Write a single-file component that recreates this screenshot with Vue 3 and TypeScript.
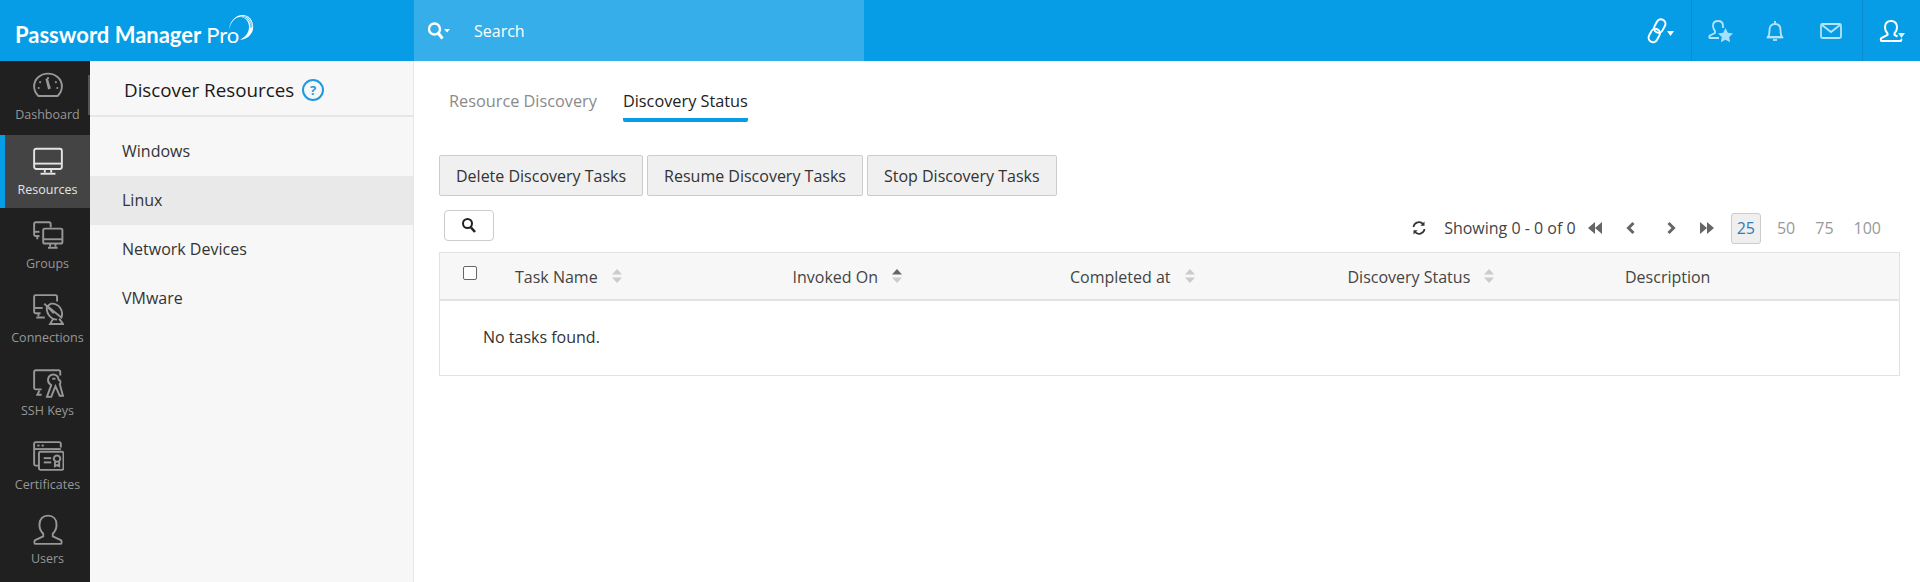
<script setup lang="ts">
interface NavItem { label: string; active?: boolean; paths: string[]; fills?: string[] }

const nav: NavItem[] = [
  {
    label: 'Dashboard',
    paths: ['M6 22.5C3.5 20 2 16.8 2 13.5 2 6.5 7.8 1.5 15 1.5S28 6.5 28 13.5c0 3.3-1.5 6.5-4 9Z', 'M15 5v1.5', 'M7 9l1.2 1', 'M23 9l-1.2 1', 'M5.5 15H7', 'M23 15h1.5'],
    fills: ['M12.6 6.5l2.2-.6 2.9 9.6-2.6.8Z'],
  },
  {
    label: 'Resources',
    active: true,
    paths: ['M4 2.500h22a2 2 0 0 1 2 2v15a2 2 0 0 1-2 2H4a2 2 0 0 1-2-2v-15a2 2 0 0 1 2-2Z', 'M2 16.500h26', 'M12 22v3', 'M18 22v3', 'M8 26h14'],
  },
  {
    label: 'Groups',
    paths: ['M7 16H3.500a1.500 1.500 0 0 1-1.500-1.500v-10A1.500 1.500 0 0 1 3.500 3H16a1.500 1.500 0 0 1 1.500 1.500V8', 'M2 12h5', 'M5 16v3', 'M12 9h15a1.500 1.500 0 0 1 1.500 1.500v11A1.500 1.500 0 0 1 27 23H12a1.500 1.500 0 0 1-1.500-1.500v-11A1.500 1.500 0 0 1 12 9Z', 'M10.500 19h18', 'M17 23v3', 'M22 23v3', 'M15 27h9'],
  },
  {
    label: 'Connections',
    paths: ['M8 19H3.500A1.500 1.500 0 0 1 2 17.500v-14A1.500 1.500 0 0 1 3.500 2H22a1.500 1.500 0 0 1 1.500 1.500V8', 'M2 14h8', 'M6 19v3', 'M4 23h8', 'M18 10a9.500 9.500 0 0 1 9.500 13L14.500 12.500A9 9 0 0 1 18 10Z', 'M14 12.500c-1 6 3 12 9.500 12.500', 'M11.500 10l9 9', 'M20 24l-3 5h12l-3.500-5'],
  },
  {
    label: 'SSH Keys',
    paths: ['M9 21H3.500A1.500 1.500 0 0 1 2 19.500v-15A1.500 1.500 0 0 1 3.500 3H25a1.500 1.500 0 0 1 1.500 1.500V8', 'M9 26H5l2-4', 'M15 12a5 5 0 0 1 10 0c2 0 2 3 1 4l3 11h-3l-4-9-4 10h-4l4-11c-2-1-3-3-3-5Z', 'M19 11h3'],
  },
  {
    label: 'Certificates',
    paths: ['M6 24H3.500A1.500 1.500 0 0 1 2 22.500v-19A1.500 1.500 0 0 1 3.500 2h22A1.500 1.500 0 0 1 27 3.500V7', 'M2 8.500h25', 'M5 5.200h2', 'M9 5.200h2', 'M8 11h20a1.500 1.500 0 0 1 1.500 1.500v14a1.500 1.500 0 0 1-1.500 1.500H8a1.500 1.500 0 0 1-1.500-1.500v-14A1.500 1.500 0 0 1 8 11Z', 'M11 17h7', 'M11 21h7', 'M23.500 14.500a3 3 0 1 1-.01 0Z', 'M21.500 20.500v4l2-1 2 1v-4'],
  },
  {
    label: 'Users',
    paths: ['M15 1.500c-5 0-8 3.500-8 8.500 0 3.500 1.500 6.500 3.500 8.500v2.500L3 24.500c-1 .6-1 3.500 0 3.500h24c1 0 1-2.900 0-3.500L19.500 21v-2.500c2-2 3.500-5 3.500-8.500 0-5-3-8.500-8-8.500Z'],
  },
]

const kinds = ['Windows', 'Linux', 'Network Devices', 'VMware']
const actions = ['Delete Discovery Tasks', 'Resume Discovery Tasks', 'Stop Discovery Tasks']
const columns = [
  { label: 'Task Name', sort: 'none' },
  { label: 'Invoked On', sort: 'asc' },
  { label: 'Completed at', sort: 'none' },
  { label: 'Discovery Status', sort: 'none' },
  { label: 'Description', sort: '' },
]
const sizes = ['25', '50', '75', '100']
</script>

<template>
  <div class="page">
    <header class="top">
      <div class="brand">
        <span class="brand-name">Password Manager <span class="brand-pro">Pro</span></span>
        <svg class="swoosh" width="26" height="28" viewBox="0 0 26 28">
          <path d="M1 15C2 6 9 0 16 1c7 1 10 8 9 14-1 6-6 10-13 11 5-3 9-7 9-13 0-6-4-10-9-10C7 3 3 8 1 15Z" fill="#fff" />
          <path d="M12 3c6-1 11 4 11 11" fill="none" stroke="#069de6" stroke-width=".7" />
          <path d="M16 2c5 1 8 6 8 11" fill="none" stroke="#069de6" stroke-width=".6" />
        </svg>
      </div>
      <div class="search">
        <svg width="24" height="20" viewBox="0 0 24 20" fill="none">
          <circle cx="7.500" cy="8" r="5.500" stroke="#fff" stroke-width="2.400" />
          <path d="M11.500 12.500l4 5" stroke="#fff" stroke-width="3" />
          <path d="M17 8h6l-3 3.500Z" fill="#fff" />
        </svg>
        <span>Search</span>
      </div>
      <div class="top-tools">
        <div class="tool-group link">
          <svg width="20" height="26" viewBox="0 0 20 26" fill="none" stroke="#fff" stroke-width="2">
            <rect x="-4.500" y="-7.500" width="9" height="14" rx="4.500" transform="translate(12.500 8.500) rotate(28)" />
            <rect x="-4.500" y="-6.500" width="9" height="14" rx="4.500" transform="translate(7.500 17) rotate(28)" />
          </svg>
          <svg class="caret" width="7" height="5" viewBox="0 0 7 5"><path d="M0 0h7L3.500 5Z" fill="#fff" /></svg>
        </div>
        <div class="tool-group middle">
          <svg width="26" height="24" viewBox="0 0 26 24" fill="none">
            <path d="M10 2c-3.500 0-5 2.500-5 5 0 2 1 3.600 2 5v2l-5 2.500c-1 .5-1 2.500 0 2.500h9" stroke="#b5e4fb" stroke-width="1.800" />
            <path d="M10 2c3.500 0 5 2.500 5 5v2" stroke="#b5e4fb" stroke-width="1.800" />
            <path d="M17.500 9l2.300 4.800 5.200.7-3.800 3.600.9 5.200-4.600-2.500-4.600 2.500.9-5.200L10 14.500l5.200-.7Z" fill="#a8e0fb" />
          </svg>
          <svg class="bell" width="20" height="24" viewBox="0 0 20 24" fill="none" stroke="#b5e4fb" stroke-width="1.800">
            <path d="M3 18c1.500-2 1.500-4 1.500-7 0-3.500 2-6 5.500-6s5.500 2.500 5.500 6c0 3 0 5 1.500 7Z" />
            <path d="M2 18.500h16" />
            <path d="M10 2v3" />
            <path d="M8 21h4" />
          </svg>
          <svg class="mail" width="24" height="18" viewBox="0 0 24 18" fill="none" stroke="#b5e4fb" stroke-width="1.800">
            <rect x="2" y="2" width="20" height="14" rx="1.500" />
            <path d="M3 3l9 7 9-7" />
          </svg>
        </div>
        <div class="tool-group account">
          <svg width="26" height="24" viewBox="0 0 26 24" fill="none" stroke="#fff" stroke-width="2">
            <path d="M12 2c-4 0-6 2.800-6 6.500 0 2.500 1 4.500 2.500 6V16l-6 3c-1 .5-1 3 0 3h19c1 0 1-1.500.5-2" />
            <path d="M12 2c4 0 6 2.800 6 6.500 0 2.500-1 4.500-2.500 6V16l3 1.500" />
          </svg>
          <svg class="caret-over" width="7" height="5" viewBox="0 0 7 5"><path d="M0 0h7L3.500 5Z" fill="#d8f1fd" /></svg>
        </div>
      </div>
    </header>

    <div class="body">
      <nav class="rail">
        <a v-for="item in nav" :key="item.label" class="rail-item" :class="{ active: item.active }">
          <svg width="32" height="32" viewBox="0 0 30 30" fill="none" stroke="currentColor" stroke-width="1.800">
            <path v-for="(d, i) in item.paths" :key="i" :d="d" />
            <path v-for="(d, i) in item.fills ?? []" :key="'f' + i" :d="d" fill="currentColor" stroke="none" />
          </svg>
          <span>{{ item.label }}</span>
        </a>
      </nav>

      <aside class="panel">
        <div class="panel-head">
          <span>Discover Resources</span>
          <span class="help">?</span>
        </div>
        <ul class="kinds">
          <li v-for="kind in kinds" :key="kind" :class="{ current: kind === 'Linux' }">{{ kind }}</li>
        </ul>
      </aside>

      <main class="main">
        <div class="tabs">
          <span class="tab">Resource Discovery</span>
          <span class="tab on">Discovery Status</span>
        </div>

        <div class="actions">
          <button v-for="action in actions" :key="action" type="button">{{ action }}</button>
        </div>

        <div class="tools">
          <button class="find" type="button" aria-label="Search">
            <svg width="16" height="16" viewBox="0 0 16 16" fill="none" stroke="#222">
              <circle cx="6.500" cy="6.500" r="4.500" stroke-width="2" />
              <path d="M10 10.500l4 4.500" stroke-width="2.600" />
            </svg>
          </button>
          <div class="pager">
            <svg class="refresh" width="16" height="16" viewBox="0 0 16 16" fill="none" stroke="#333" stroke-width="1.700">
              <path d="M2.500 7a5.500 5.500 0 0 1 9.700-2.800" />
              <path d="M13.500 9a5.500 5.500 0 0 1-9.700 2.800" />
              <path d="M13.500 1.500v4.200H9.300Z" fill="#333" stroke="none" />
              <path d="M2.500 14.500v-4.200h4.200Z" fill="#333" stroke="none" />
            </svg>
            <span class="count">Showing 0 - 0 of 0</span>
            <div class="arrows">
              <svg width="14" height="14" viewBox="0 0 14 14"><path d="M7 1v12L0 7ZM14 1v12L7 7Z" fill="#666" /></svg>
              <svg width="14" height="14" viewBox="0 0 14 14"><path d="M9.500 2 4.500 7l5 5" fill="none" stroke="#666" stroke-width="3" /></svg>
              <svg class="next" width="14" height="14" viewBox="0 0 14 14"><path d="M4.500 2l5 5-5 5" fill="none" stroke="#666" stroke-width="3" /></svg>
              <svg width="14" height="14" viewBox="0 0 14 14"><path d="M0 1v12l7-6ZM7 1v12l7-6Z" fill="#666" /></svg>
            </div>
            <div class="sizes">
              <span v-for="size in sizes" :key="size" class="size" :class="{ picked: size === '25' }">{{ size }}</span>
            </div>
          </div>
        </div>

        <div class="grid">
          <div class="grid-head">
            <span class="check-cell"><i class="check"></i></span>
            <span v-for="col in columns" :key="col.label" class="col">
              {{ col.label }}
              <svg v-if="col.sort" class="sort" width="10" height="14" viewBox="0 0 10 14">
                <path d="M5 0l5 5.500H0Z" :fill="col.sort === 'asc' ? '#666' : '#ccc'" />
                <path d="M5 14l5-5.500H0Z" fill="#ccc" />
              </svg>
            </span>
          </div>
          <div class="empty">No tasks found.</div>
        </div>
      </main>
    </div>
  </div>
</template>

<style>
html,
body {
  margin: 0;
  background: #fff;
}
</style>

<style scoped>
.page {
  width: 1920px;
  height: 582px;
  overflow: hidden;
  display: flex;
  flex-direction: column;
  font-family: "Open Sans", "Liberation Sans", sans-serif;
  color: #333;
}

.top {
  height: 61px;
  flex: none;
  display: flex;
  background: #069de6;
}
.brand {
  width: 414px;
  flex: none;
  box-sizing: border-box;
  padding-left: 15px;
  display: flex;
  align-items: flex-start;
}
.brand-name {
  margin-top: 20px;
  font-family: Lato, "Open Sans", sans-serif;
  font-size: 22px;
  font-weight: 700;
  line-height: 29px;
  color: #fff;
  white-space: nowrap;
}
.brand-pro {
  font-weight: 400;
}
.swoosh {
  margin-top: 14px;
  margin-left: -11px;
}
.search {
  width: 450px;
  flex: none;
  box-sizing: border-box;
  padding-left: 13px;
  display: flex;
  align-items: center;
  gap: 23px;
  background: #35aeea;
  color: #fff;
  font-size: 16px;
}
.top-tools {
  flex: 1;
  display: flex;
  justify-content: flex-end;
}
.tool-group {
  display: flex;
  align-items: center;
  box-sizing: border-box;
}
.link {
  padding-right: 17px;
  border-right: 1px solid #0b8bcb;
  height: 61px;
}
.caret {
  margin-top: 5px;
}
.middle {
  width: 171px;
  padding-left: 16px;
  border-right: 1px solid #0b8bcb;
}
.bell {
  margin-left: 31px;
}
.mail {
  margin-left: 34px;
}
.account {
  width: 57px;
  padding-left: 16px;
  position: relative;
}
.caret-over {
  position: absolute;
  left: 35px;
  top: 33px;
}

.body {
  flex: 1;
  display: flex;
  min-height: 0;
}

.rail {
  width: 90px;
  flex: none;
  display: flex;
  flex-direction: column;
  background: #202020;
}
.rail-item {
  height: 73.700px;
  flex: none;
  box-sizing: border-box;
  padding-top: 11px;
  border-left: 5px solid transparent;
  display: flex;
  flex-direction: column;
  align-items: center;
  color: #979797;
  font-size: 12.500px;
  line-height: 16px;
}
.rail-item span {
  margin-top: 4.500px;
}
.rail-item:first-child span {
  margin-top: 3px;
}
.rail-item.active {
  background: #444;
  border-left-color: #069de6;
  color: #e4e4e4;
}

.panel {
  width: 324px;
  flex: none;
  box-sizing: border-box;
  background: #f7f7f7;
  border-right: 1px solid #e6e6e6;
  position: relative;
}
.panel-head {
  height: 56px;
  box-sizing: border-box;
  padding-left: 34px;
  padding-top: 3px;
  display: flex;
  align-items: center;
  gap: 8px;
  border-bottom: 2px solid #e6e6e6;
  font-size: 18.800px;
  color: #1a1a1a;
}
.panel::before {
  content: "";
  position: absolute;
  left: -2px;
  top: 14px;
  width: 2px;
  height: 40px;
  background: #555;
}
.help {
  width: 18px;
  height: 18px;
  flex: none;
  border: 2px solid #1e9be0;
  border-radius: 50%;
  color: #1e9be0;
  font-size: 13px;
  font-weight: 700;
  line-height: 18px;
  text-align: center;
}
.kinds {
  margin: 10px 0 0;
  padding: 0;
  list-style: none;
}
.kinds li {
  height: 49px;
  padding-left: 32px;
  font-size: 16px;
  line-height: 48px;
  color: #333;
}
.kinds li.current {
  background: #e9e9e9;
}

.main {
  flex: 1;
  min-width: 0;
  box-sizing: border-box;
  padding-left: 25px;
  padding-right: 20px;
}
.tabs {
  display: flex;
  gap: 26px;
  height: 61px;
  padding-left: 10px;
  box-sizing: border-box;
  padding-top: 29px;
  font-size: 16.300px;
  line-height: 22px;
}
.tab {
  color: #8a8a8a;
  height: 28px;
}
.tab.on {
  color: #222;
  border-bottom: 4px solid #069de6;
  border-radius: 0 0 2px 2px;
}
.actions {
  display: flex;
  gap: 4px;
  margin-top: 33px;
}
.actions button {
  height: 41px;
  padding: 0 16px;
  border: 1px solid #ccc;
  border-radius: 2px;
  background: #f0f0f0;
  font: 16px "Open Sans", sans-serif;
  color: #333;
}
.tools {
  display: flex;
  justify-content: space-between;
  height: 42px;
  margin-top: 14px;
  padding-left: 5px;
}
.find {
  width: 50px;
  height: 31px;
  padding: 0;
  border: 1px solid #ccc;
  border-radius: 4px;
  background: #fff;
}
.find svg {
  display: block;
  margin: 0 auto 2px;
}
.pager {
  display: flex;
  align-items: center;
  height: 42px;
  font-size: 16px;
  margin-top: -3px;
}
.refresh {
  margin-right: 17px;
}
.count {
  color: #444;
}
.arrows {
  display: flex;
  gap: 22px;
  margin-left: 12px;
  margin-right: 17px;
}
.next {
  margin-left: 4px;
}
.sizes {
  display: flex;
  align-items: center;
  gap: 20px;
  margin-right: 19px;
  color: #999;
}
.size.picked {
  height: 29px;
  padding: 0 5px;
  line-height: 29px;
  margin-right: -4px;
  border: 1px solid #ccc;
  border-radius: 3px;
  background: #efefef;
  color: #337ab7;
}
.grid {
  box-sizing: border-box;
  height: 124px;
  border: 1px solid #e2e2e2;
}
.grid-head {
  height: 46px;
  box-sizing: content-box;
  display: flex;
  align-items: center;
  background: #f7f7f7;
  border-bottom: 2px solid #e2e2e2;
  font-size: 16px;
}
.check-cell {
  width: 75px;
  flex: none;
  padding-left: 23px;
  box-sizing: border-box;
  display: flex;
  margin-top: -7px;
}
.check {
  width: 14px;
  height: 14px;
  box-sizing: border-box;
  border: 1px solid #666;
  border-radius: 2px;
  background: #fff;
}
.col {
  width: 277.500px;
  flex: none;
  display: flex;
  align-items: center;
  gap: 14px;
  padding-top: 1px;
  color: #444;
}
.sort {
  margin-top: -2px;
}
.empty {
  padding-left: 43px;
  font-size: 16px;
  line-height: 60px;
  margin-top: 6px;
  color: #333;
}
</style>
